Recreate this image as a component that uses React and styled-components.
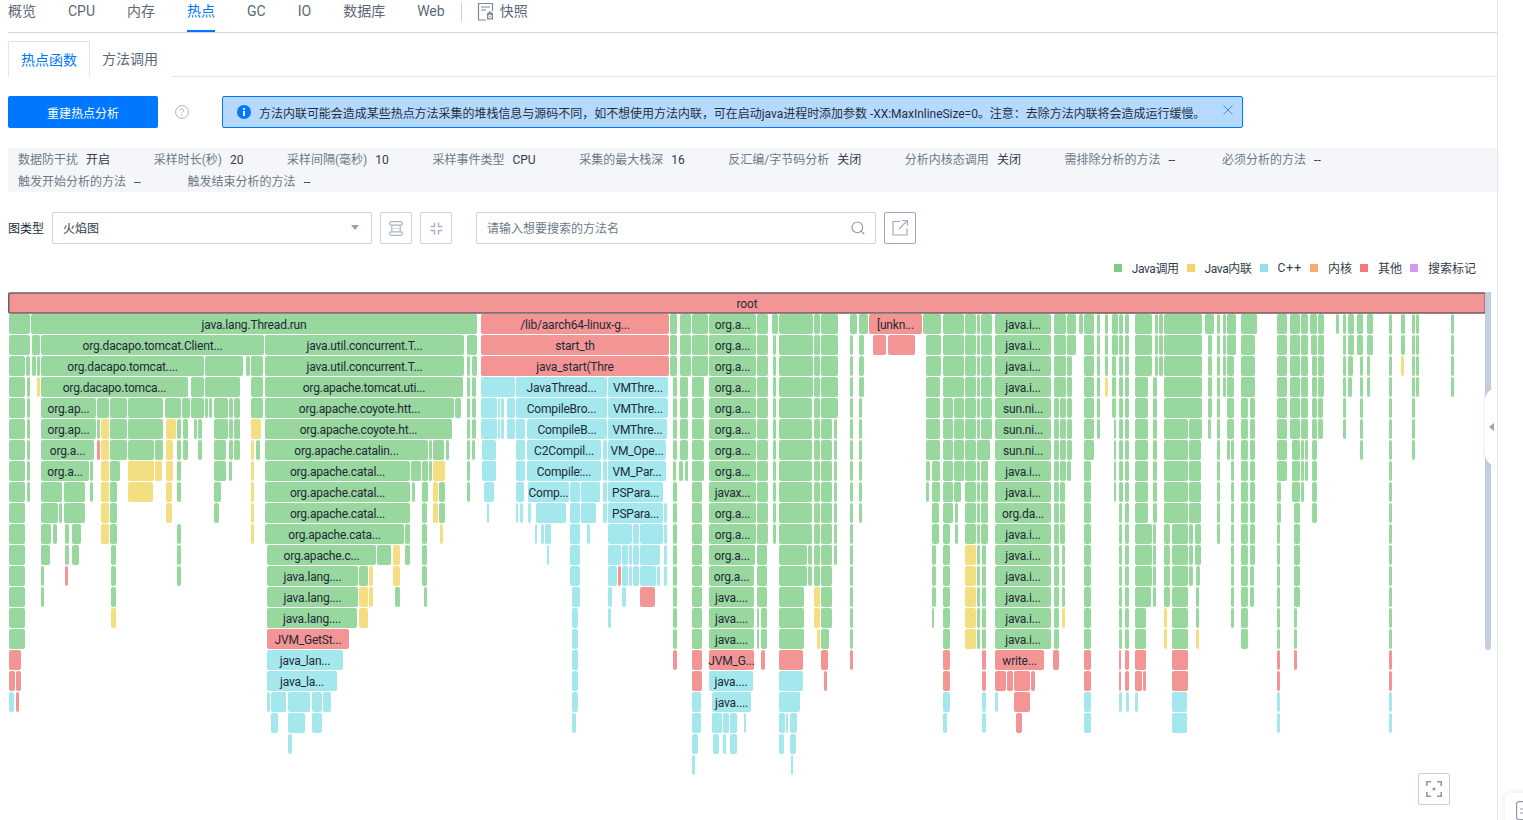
import React from 'react';
import styled, { createGlobalStyle } from 'styled-components';
import { Search } from 'lucide-react';

const GlobalStyle = createGlobalStyle`
  html, body {
    margin: 0;
    padding: 0;
    background: #fff;
    overflow: hidden;
  }
  body {
    font-family: Roboto, "Noto Sans CJK SC", sans-serif;
    font-size: 12px;
    color: #333c4b;
  }
  * { box-sizing: border-box; }
`;

const Page = styled.div`
  position: relative;
  width: 1523px;
  height: 820px;
  padding-left: 8px;
  overflow: hidden;
`;

const Content = styled.div`
  width: 1490px;
  height: 820px;
`;

const Rule = styled.div`
  position: absolute;
  top: 0;
  left: 1497px;
  width: 1px;
  height: 820px;
  background: #e2e7f0;
`;

const NavBar = styled.nav`
  display: flex;
  align-items: flex-start;
  gap: 32px;
  height: 33px;
  border-bottom: 1px solid #d3dae6;
`;

const NavItem = styled.a`
  height: 32px;
  font-size: 14px;
  line-height: 22px;
  color: ${(p) => (p.$active ? '#0077ff' : '#5c6878')};
  border-bottom: 2px solid ${(p) => (p.$active ? '#0077ff' : 'transparent')};
`;

const NavDivider = styled.span`
  width: 1px;
  height: 18px;
  margin: 3px -16px 0 -16px;
  background: #c9d0dc;
`;

const SnapshotLink = styled.a`
  display: flex;
  align-items: flex-start;
  gap: 6px;
  margin-left: -1px;
  font-size: 14px;
  line-height: 22px;
  color: #5c6878;
`;

const SubTabs = styled.div`
  display: flex;
  margin-top: 8px;
  height: 36px;
  border-bottom: 1px solid #dfe4ee;
`;

const SubTab = styled.a`
  width: 82px;
  height: 36px;
  padding-right: ${(p) => (p.$active ? '0' : '2px')};
  font-size: 14px;
  line-height: 37px;
  text-align: center;
  color: ${(p) => (p.$active ? '#0077ff' : '#5c6878')};
  background: #fff;
  border: ${(p) => (p.$active ? '1px solid #dfe4ee' : 'none')};
  border-bottom: ${(p) => (p.$active ? '1px solid #fff' : 'none')};
`;

const ActionRow = styled.div`
  display: flex;
  align-items: center;
  margin-top: 19px;
  height: 32px;
`;

const RebuildButton = styled.button`
  width: 150px;
  height: 32px;
  border: none;
  border-radius: 2px;
  background: #0077ff;
  color: #fff;
  font: inherit;
  font-size: 12px;
`;

const HelpMark = styled.span`
  display: flex;
  margin: 0 33px 0 17px;
`;

const AlertBox = styled.div`
  display: flex;
  align-items: center;
  width: 1021px;
  height: 32px;
  padding: 0 9px 0 14px;
  background: #b6d9ff;
  border: 1px solid #0077ff;
  border-radius: 2px;
`;

const AlertText = styled.span`
  flex: 1;
  margin-left: 8px;
  padding-top: 1px;
  font-size: 12px;
  letter-spacing: -0.03px;
  color: #25303f;
  white-space: nowrap;
`;

const InfoBar = styled.div`
  display: flex;
  flex-wrap: wrap;
  align-content: flex-start;
  margin-top: 20px;
  height: 44px;
  padding: 1px 0 0 10px;
  background: #f4f6fa;
`;

const InfoItem = styled.div`
  display: flex;
  gap: 8px;
  height: 22px;
  margin-right: 43.6px;
  line-height: 22px;
  white-space: nowrap;
`;

const InfoLabel = styled.span`
  color: #6e7987;
`;

const InfoValue = styled.span`
  min-width: 10px;
  color: #333c4b;
`;

const Toolbar = styled.div`
  display: flex;
  align-items: center;
  margin-top: 20px;
  height: 32px;
`;

const FieldLabel = styled.label`
  width: 44px;
  padding-bottom: 1px;
  color: #252c38;
`;

const SelectBox = styled.div`
  display: flex;
  align-items: center;
  justify-content: space-between;
  width: 320px;
  height: 32px;
  padding: 0 10px 1px;
  border: 1px solid #ccd3df;
  border-radius: 2px;
  color: #333c4b;
`;

const CaretMark = styled.span`
  width: 0;
  height: 0;
  margin-right: 2px;
  border-left: 4px solid transparent;
  border-right: 4px solid transparent;
  border-top: 5px solid #97a1b1;
`;

const IconButton = styled.button`
  display: flex;
  align-items: center;
  justify-content: center;
  width: 32px;
  height: 32px;
  margin-left: 8px;
  padding: 0;
  background: #fff;
  border: 1px solid ${(p) => (p.$dark ? '#9ea8b8' : '#ccd3df')};
  border-radius: 2px;
`;

const SearchBox = styled.div`
  display: flex;
  align-items: center;
  justify-content: space-between;
  width: 400px;
  height: 32px;
  margin-left: 24px;
  padding: 0 9px 1px 10px;
  border: 1px solid #ccd3df;
  border-radius: 2px;
  color: #6e7987;
`;

const Legend = styled.div`
  display: flex;
  justify-content: flex-end;
  align-items: center;
  gap: 8px;
  height: 16px;
  margin-top: 16px;
  margin-bottom: 16px;
  padding: 0 22px 1px 0;
`;

const LegendItem = styled.div`
  display: flex;
  align-items: center;
  gap: 10px;
  letter-spacing: ${(p) => p.$tracking}px;
  color: #333c4b;
`;

const LegendSwatch = styled.i`
  width: 8px;
  height: 8px;
  background: ${(p) => p.$color};
`;

const ChartWrap = styled.div`
  position: relative;
  width: 1489px;
  height: 528px;
`;

const FlameSvg = styled.svg`
  display: block;
  font-size: 12px;
  letter-spacing: -0.18px;
`;

const ScrollThumb = styled.div`
  position: absolute;
  left: 1477px;
  top: 0;
  width: 6px;
  height: 358px;
  border-radius: 0 0 3px 3px;
  background: #c3cde0;
`;

const SideHandle = styled.div`
  position: absolute;
  left: 1477px;
  top: 96px;
  width: 12px;
  height: 78px;
  background: #fff;
  border-radius: 12px 0 0 12px;
  box-shadow: -1px 0 3px rgba(90, 105, 130, 0.12);

  &::after {
    content: '';
    position: absolute;
    left: 4px;
    top: 35px;
    border-top: 4px solid transparent;
    border-bottom: 4px solid transparent;
    border-right: 5px solid #98a3b6;
  }
`;

const FocusButton = styled.button`
  position: absolute;
  left: 1410px;
  top: 481px;
  display: flex;
  align-items: center;
  justify-content: center;
  width: 32px;
  height: 32px;
  padding: 0;
  background: #fff;
  border: 1px solid #c6d0de;
  border-radius: 2px;
`;

const CornerWidget = styled.div`
  position: absolute;
  left: 1505px;
  top: 793px;
  width: 40px;
  height: 40px;
  padding: 8px 0 0 11px;
  background: #fff;
  border-radius: 6px 0 0 0;
  box-shadow: 0 0 6px rgba(90, 105, 130, 0.16);
`;

// flame graph frames per depth: [x0, x1, colour, label]
const COLORS = { g: '#98d79e', y: '#f4de82', c: '#a4e8ed', r: '#f39595' };

const ORG = 'org.a...';
const JI = 'java.i...';
const SN = 'sun.ni...';
const JV = 'java....';
const CAT = 'org.apache.catal...';
const LANG = 'java.lang....';
const CONC = 'java.util.concurrent.T...';

const FRAMES = [
  [[9,30],[31,477,'g','java.lang.Thread.run'],[481,669,'r','/lib/aarch64-linux-g...'],[670,677],[680,691],[692,708],[709,756,'g',ORG],[757,768],[772,778],[779,813],[814,820],[821,838],[850,857],[859,868],[869,922,'r','[unkn...'],[923,941],[943,964],[965,976],[977,980],[981,992],[995,1051,'g',JI],[1054,1066],[1067,1076],[1079,1083],[1084,1094],[1097,1100],[1105,1108],[1112,1118],[1119,1123],[1125,1129],[1135,1152],[1155,1158],[1159,1163],[1164,1202],[1205,1214],[1217,1220],[1223,1226],[1227,1236],[1241,1257],[1277,1287],[1290,1300],[1301,1308],[1310,1317],[1318,1324],[1336,1339],[1343,1346],[1348,1354],[1357,1363],[1367,1373],[1389,1392],[1401,1405],[1412,1415],[1416,1419],[1451,1454]],
  [[9,30],[32,40],[41,264,'g','org.dacapo.tomcat.Client...'],[265,464,'g',CONC],[467,477],[481,669,'r','start_th'],[670,677],[680,691],[692,708],[709,756,'g',ORG],[757,768],[773,776],[779,813],[814,820],[821,838],[850,853],[859,864],[873,886,'r'],[888,915,'r'],[926,941],[943,964],[965,976],[977,980],[981,992],[995,1051,'g',JI],[1054,1066],[1067,1076],[1084,1094],[1097,1100],[1105,1108],[1112,1118],[1119,1123],[1125,1129],[1135,1152],[1155,1158],[1159,1163],[1164,1202],[1208,1212],[1217,1220],[1223,1226],[1227,1236],[1241,1255],[1277,1287],[1290,1300],[1301,1308],[1311,1317],[1318,1324],[1343,1346],[1348,1354],[1357,1363],[1367,1373],[1389,1392],[1401,1405],[1412,1415],[1416,1419],[1451,1454]],
  [[9,25],[26,30],[32,36],[37,40],[41,204,'g','org.dacapo.tomcat....'],[205,243],[246,250],[251,263],[265,464,'g',CONC],[467,470],[472,477],[481,669,'r','java_start(Thre'],[670,677],[680,691],[692,708],[709,756,'g',ORG],[757,768],[773,776],[779,813],[814,820],[821,838],[850,853],[859,864],[926,941],[943,964],[965,976],[977,980],[981,992],[995,1051,'g',JI],[1054,1066],[1067,1072],[1084,1094],[1097,1100],[1105,1108],[1112,1116],[1119,1123],[1125,1129],[1135,1152],[1155,1158],[1159,1163],[1164,1202],[1208,1212],[1217,1220],[1223,1226],[1227,1234],[1241,1255],[1277,1287],[1290,1300],[1301,1308],[1312,1317],[1318,1324],[1343,1346],[1348,1353],[1360,1363],[1367,1370],[1389,1392],[1401,1404,'y'],[1412,1415],[1416,1419],[1451,1454]],
  [[9,25],[27,30],[37,40,'y'],[41,188,'g','org.dacapo.tomca...'],[191,204],[205,240],[251,263],[265,463,'g','org.apache.tomcat.uti...'],[467,470],[472,476],[481,515,'c'],[516,607,'c','JavaThread...'],[608,668,'c','VMThre...'],[673,677],[680,688],[692,704],[709,756,'g',ORG],[757,768],[773,776],[779,813],[814,820],[821,838],[850,853],[859,864],[926,940],[943,964],[965,976],[977,980],[981,992],[995,1051,'g',JI],[1054,1066],[1067,1072],[1084,1094],[1097,1100],[1105,1108,'y'],[1112,1116],[1119,1123],[1125,1129],[1135,1148],[1153,1157],[1164,1202],[1208,1212],[1217,1220],[1223,1226],[1227,1234],[1241,1255],[1277,1287],[1290,1300],[1301,1308],[1312,1317],[1318,1324],[1343,1346],[1348,1352],[1360,1363],[1367,1370],[1389,1392],[1412,1415],[1416,1419],[1451,1454]],
  [[9,25],[27,30],[41,96,'g','org.ap...'],[97,109],[110,127],[128,163],[165,181],[182,190],[191,204],[205,208],[209,212],[214,228],[229,233],[234,240],[251,263],[265,454,'g','org.apache.coyote.htt...'],[455,461],[467,470],[472,476],[481,497,'c'],[498,500,'c'],[501,504,'c'],[507,515,'c'],[516,607,'c','CompileBro...'],[608,668,'c','VMThre...'],[673,677],[680,688],[692,704],[709,756,'g',ORG],[757,768],[773,776],[779,812],[814,820],[821,838],[850,853],[859,862],[926,940],[943,953],[954,964],[965,976],[977,980],[981,992],[995,1051,'g',SN],[1054,1059],[1060,1066],[1067,1072],[1084,1094],[1097,1100],[1112,1116],[1119,1123],[1125,1129],[1135,1148],[1153,1157],[1164,1202],[1208,1212],[1217,1220],[1227,1234],[1241,1248],[1250,1255],[1277,1287],[1290,1300],[1301,1308],[1312,1317],[1318,1323],[1343,1346],[1360,1363],[1389,1392],[1412,1415]],
  [[9,25],[27,30],[41,96,'g','org.ap...'],[97,100],[101,109,'y'],[110,127],[128,163],[166,176,'y'],[177,181],[183,188],[194,197],[198,202],[214,228],[229,233],[234,240],[251,261,'y'],[265,452,'g','org.apache.coyote.ht...'],[467,470],[472,476],[481,497,'c'],[498,500,'c'],[501,504,'c'],[507,515,'c'],[516,525,'c'],[527,607,'c','CompileB...'],[608,667,'c','VMThre...'],[673,677],[680,688],[692,704],[709,756,'g',ORG],[757,768],[773,776],[779,812],[814,820],[821,832],[834,837],[850,853],[859,862],[926,940],[943,953],[954,964],[965,976],[977,980],[981,992],[995,1051,'g',SN],[1054,1059],[1060,1066],[1067,1072],[1084,1094],[1097,1100],[1114,1116],[1119,1123],[1125,1129],[1135,1148],[1153,1157],[1164,1188],[1189,1202],[1208,1211],[1217,1220],[1227,1234],[1241,1248],[1250,1255],[1277,1287],[1290,1300],[1301,1308],[1312,1317],[1318,1323],[1343,1346],[1360,1363],[1389,1392],[1412,1415]],
  [[9,25],[27,30],[41,94,'g','org.a...'],[97,100,'r'],[101,109,'y'],[110,127],[128,154],[155,163],[166,173,'y'],[177,181],[183,188],[198,202],[214,226],[229,233],[234,240],[251,254,'y'],[256,260],[265,428,'g','org.apache.catalin...'],[429,432],[433,444],[446,449],[467,470],[472,475],[482,496,'c'],[516,525,'c'],[527,601,'c','C2Compil...'],[603,607,'c'],[608,666,'c','VM_Ope...'],[673,677],[680,688],[692,704],[709,756,'g',ORG],[757,768],[773,776],[779,812],[814,820],[821,832],[834,837],[850,853],[859,862],[926,940],[943,953],[954,964],[965,976],[977,990],[995,1051,'g',SN],[1054,1059],[1060,1066],[1067,1072],[1084,1094],[1114,1116],[1119,1123],[1125,1129],[1135,1148],[1153,1157],[1164,1188],[1189,1201],[1217,1220],[1227,1230],[1231,1234],[1241,1248],[1250,1255],[1277,1287],[1292,1300],[1301,1304],[1305,1308],[1312,1317],[1360,1363],[1389,1392],[1412,1415]],
  [[9,25],[27,30],[41,89,'g','org.a...'],[90,93],[101,109,'y'],[110,120],[128,154,'y'],[155,162,'y'],[166,173,'y'],[177,181],[214,226],[229,232],[251,254,'y'],[265,410,'g',CAT],[411,421],[422,428],[429,432],[433,445,'y'],[467,470],[482,496,'c'],[516,525,'c'],[527,601,'c','Compile:...'],[603,607,'c'],[608,666,'c','VM_Par...'],[673,676],[679,683],[685,688],[692,704],[709,756,'g',ORG],[757,768],[773,776],[779,812],[814,820],[821,832],[834,837],[850,853],[859,862],[926,930],[932,940],[943,953],[954,964],[965,976],[977,980],[981,988],[995,1051,'g',JI],[1054,1059],[1060,1066],[1067,1071],[1084,1091],[1114,1116],[1119,1123],[1125,1129],[1135,1148],[1153,1157],[1164,1188],[1189,1201],[1217,1220],[1231,1234],[1241,1248],[1250,1255],[1277,1287],[1292,1300],[1301,1304],[1305,1308],[1312,1317],[1389,1392]],
  [[9,25],[27,30],[41,62],[64,85],[90,93],[101,109,'y'],[110,117],[128,153,'y'],[166,172,'y'],[177,181],[214,221],[251,254,'y'],[265,410,'g',CAT],[412,415],[422,428],[433,438,'y'],[439,445],[467,470],[484,494,'c'],[516,524,'c'],[528,569,'c','Comp...'],[570,580,'c'],[581,600,'c'],[603,607,'c'],[608,663,'c','PSPara...'],[673,677],[692,702],[709,756,'g','javax...'],[757,768],[773,776],[779,812],[814,820],[821,832],[834,837],[850,853],[859,862],[926,929],[932,940],[943,953],[954,961],[965,976],[977,980],[981,988],[995,1051,'g',JI],[1054,1059],[1060,1065],[1084,1091],[1114,1116],[1119,1123],[1125,1129],[1135,1148],[1153,1157],[1164,1188],[1189,1201],[1217,1220],[1231,1234],[1241,1248],[1250,1255],[1277,1281],[1292,1300],[1301,1304],[1312,1317],[1389,1392]],
  [[9,25],[41,58],[59,62],[64,85],[101,109,'y'],[110,117],[166,172,'y'],[214,219],[251,254,'y'],[265,410,'g',CAT],[422,427],[433,438,'y'],[439,445],[487,489,'c'],[516,518,'c'],[520,523,'c'],[528,531,'c'],[536,566,'c'],[570,580,'c'],[581,596,'c'],[603,607,'c'],[608,663,'c','PSPara...'],[664,667,'c'],[673,677],[692,702],[709,756,'g',ORG],[757,768],[773,776],[779,812],[814,820],[821,832],[834,837],[850,853],[859,862],[932,939],[943,953],[955,958],[965,976],[977,980],[981,988],[995,1051,'g','org.da...'],[1054,1059],[1060,1065],[1084,1091],[1119,1122],[1125,1129],[1135,1148],[1153,1157],[1164,1188],[1189,1201],[1217,1220],[1231,1234],[1241,1248],[1250,1255],[1277,1281],[1294,1300],[1312,1317],[1389,1392]],
  [[9,25],[41,51],[53,57],[65,69],[72,81],[101,109,'y'],[110,117],[177,181],[251,254,'y'],[265,404,'g','org.apache.cata...'],[405,410],[422,427],[440,443,'y'],[535,537,'c'],[541,544,'c'],[545,551,'c'],[570,580,'c'],[587,590,'c'],[608,632,'c'],[633,639,'c'],[640,663,'c'],[664,667,'c'],[673,677],[692,702],[709,756,'g',ORG],[757,768],[773,776],[779,812],[814,820],[821,832],[834,837],[850,853],[932,939],[943,950],[955,958],[965,976],[977,980],[981,988],[995,1051,'g',JI],[1054,1059],[1060,1065],[1084,1091],[1119,1122],[1125,1129],[1135,1152],[1153,1156],[1164,1170],[1172,1188],[1189,1193],[1195,1201],[1217,1220],[1231,1234],[1241,1248],[1250,1255],[1277,1280],[1294,1300],[1389,1392]],
  [[9,25],[41,50],[65,69],[72,79],[111,116],[177,181],[267,376,'g','org.apache.c...'],[377,391],[393,400,'y'],[405,410],[422,427],[547,549,'c'],[570,580,'c'],[608,621,'c'],[622,628,'c'],[629,632,'c'],[633,639,'c'],[640,660,'c'],[664,667,'c'],[673,677],[692,702],[709,755,'g',ORG],[757,767],[779,807],[808,812],[814,820],[821,832],[834,837],[850,853],[932,936],[943,950],[965,976,'y'],[977,980],[982,986],[995,1051,'g',JI],[1054,1059],[1062,1065],[1084,1091],[1119,1122],[1125,1129],[1135,1152],[1153,1156],[1164,1170],[1172,1188],[1189,1193],[1195,1201],[1231,1234],[1241,1248],[1250,1255],[1277,1280],[1294,1300],[1389,1392]],
  [[9,25],[41,44],[65,68,'r'],[111,116],[177,181],[267,358,'g',LANG],[359,368],[369,373,'y'],[393,400,'y'],[422,427],[570,580,'c'],[608,617,'c'],[618,621,'r'],[622,628,'c'],[629,632,'c'],[633,639,'c'],[640,656,'c'],[657,660,'c'],[664,667,'c'],[673,677],[692,702],[709,754,'g',ORG],[757,767],[779,807],[808,812],[814,820],[821,832],[850,853],[932,936],[943,950],[965,976,'y'],[977,980],[982,986],[995,1051,'g',JI],[1054,1059],[1062,1065],[1084,1091],[1119,1122],[1125,1129],[1135,1152],[1153,1156],[1164,1170],[1172,1188],[1189,1193],[1196,1200],[1231,1234],[1241,1248],[1250,1254],[1277,1280],[1294,1300],[1389,1392]],
  [[9,25],[41,44],[111,116],[267,358,'g',LANG],[359,368,'y'],[369,373,'y'],[395,400],[424,427],[572,580,'c'],[608,612,'c'],[622,626,'c'],[640,655,'r'],[673,677],[692,702],[709,754,'g',JV],[757,767],[779,804],[814,820,'y'],[821,832],[850,853],[932,936],[943,950],[965,976,'y'],[977,980],[982,986],[995,1051,'g',JI],[1054,1059],[1062,1065],[1084,1091],[1119,1122],[1125,1129],[1135,1151],[1153,1156],[1164,1170],[1172,1188],[1196,1199],[1231,1234],[1241,1248],[1250,1254],[1277,1280],[1294,1300],[1389,1392]],
  [[9,25],[111,116,'y'],[267,357,'g',LANG],[359,368,'y'],[572,578,'c'],[608,611,'c'],[673,677],[692,702],[709,754,'g',JV],[757,759],[761,767],[779,804],[814,820,'y'],[821,832],[850,853],[932,934],[943,950],[965,976,'y'],[977,980],[982,986],[995,1051,'g',JI],[1054,1059],[1062,1065,'y'],[1084,1091],[1119,1122],[1125,1129],[1135,1146],[1164,1167,'y'],[1172,1188],[1196,1199],[1231,1234],[1241,1248],[1277,1280],[1294,1297],[1389,1392]],
  [[9,25],[267,349,'r','JVM_GetSt...'],[572,578,'c'],[673,677],[692,702],[709,754,'g',JV],[757,759],[761,767],[779,804],[817,820,'y'],[821,829],[850,853],[943,950],[965,976,'y'],[977,980],[982,986],[995,1051,'g',JI],[1054,1059],[1084,1091],[1119,1122],[1125,1129],[1135,1146],[1164,1167,'y'],[1172,1188],[1196,1199,'y'],[1241,1248],[1277,1280],[1294,1297],[1389,1392]],
  [[9,21,'r'],[267,343,'c','java_lan...'],[572,578,'c'],[673,677,'r'],[692,702,'r'],[709,754,'r','JVM_G...'],[761,765,'r'],[779,803,'r'],[821,828,'r'],[850,853,'r'],[943,950,'r'],[982,986,'r'],[995,1044,'r','write...'],[1053,1059,'r'],[1084,1091,'r'],[1119,1121,'r'],[1125,1129,'r'],[1135,1146,'r'],[1172,1188,'r'],[1277,1280,'r'],[1294,1297,'r'],[1389,1392,'r']],
  [[9,15,'r'],[16,21,'r'],[267,337,'c','java_la...'],[572,578,'c'],[692,702,'r'],[709,753,'c',JV],[779,803,'c'],[824,827,'r'],[943,950,'r'],[982,986,'r'],[995,1006,'r'],[1007,1013,'r'],[1014,1030,'r'],[1031,1035,'r'],[1084,1091,'r'],[1119,1121,'r'],[1125,1129,'r'],[1135,1142,'r'],[1143,1146,'r'],[1172,1188,'r'],[1277,1280,'r'],[1389,1392,'r']],
  [[9,14,'c'],[16,19,'r'],[267,270,'c'],[271,286,'c'],[288,310,'c'],[312,322,'c'],[323,331,'c'],[572,578,'c'],[692,701,'c'],[712,751,'c',JV],[779,800,'c'],[943,950,'c'],[982,986,'c'],[995,998,'c'],[1014,1030,'r'],[1084,1091,'c'],[1119,1122,'c'],[1126,1129,'c'],[1135,1138,'c'],[1172,1187,'c'],[1277,1280,'c'],[1389,1392,'c']],
  [[271,278,'c'],[288,305,'c'],[312,322,'c'],[572,576,'c'],[692,701,'c'],[712,722,'c'],[723,729,'c'],[730,737,'c'],[744,746,'c'],[779,785,'c'],[786,788,'c'],[790,797,'c'],[943,947,'c'],[982,986,'c'],[1016,1022,'r'],[1084,1091,'c'],[1172,1187,'c'],[1277,1280,'c'],[1389,1392,'c']],
  [[288,292,'c'],[692,698,'c'],[713,719,'c'],[723,726,'c'],[730,737,'c'],[779,784,'c'],[790,796,'c']],
  [[692,695,'c'],[791,793,'c']],
];

const INFO = [
  ['数据防干扰', '开启'],
  ['采样时长(秒)', '20'],
  ['采样间隔(毫秒)', '10'],
  ['采样事件类型', 'CPU'],
  ['采集的最大栈深', '16'],
  ['反汇编/字节码分析', '关闭'],
  ['分析内核态调用', '关闭'],
  ['需排除分析的方法', '--'],
  ['必须分析的方法', '--'],
  ['触发开始分析的方法', '--'],
  ['触发结束分析的方法', '--'],
];

const LEGEND = [
  ['Java调用', '#7fcb88', -0.4],
  ['Java内联', '#f2d36e', -0.4],
  ['C++', '#92e3e8', 1],
  ['内核', '#f9a972', 0],
  ['其他', '#f07a7a', 0],
  ['搜索标记', '#d698ec', 0],
];

const NAV = ['概览', 'CPU', '内存', '热点', 'GC', 'IO', '数据库', 'Web'];

const SnapshotIcon = () => (
  <svg width="17" height="19" viewBox="0 0 17 19" fill="none" stroke="#7d8799" strokeWidth="1.2" style={{ marginTop: 2 }}>
    <path d="M9 18H1.5V1.5h14V9" />
    <path d="M4 5h9M4 8h5" />
    <path d="M10 11h6v6.5h-6zM11.5 11V9.5h3V11" fill="#7d8799" stroke="none" />
    <circle cx="13" cy="14.5" r="1.3" stroke="#fff" />
  </svg>
);

const HelpIcon = () => (
  <svg width="14" height="14" viewBox="0 0 14 14" fill="none">
    <circle cx="7" cy="7" r="6.4" stroke="#a7b0be" />
    <path d="M5.2 5.4C5.2 4.3 6 3.7 7 3.7s1.8.7 1.8 1.6c0 1.3-1.8 1.3-1.8 2.9" stroke="#a7b0be" />
    <circle cx="7" cy="10" r=".7" fill="#a7b0be" />
  </svg>
);

const InfoIcon = () => (
  <svg width="14" height="14" viewBox="0 0 14 14">
    <circle cx="7" cy="7" r="7" fill="#0077ff" />
    <rect x="6.1" y="3" width="1.8" height="1.8" fill="#fff" />
    <rect x="6.1" y="6" width="1.8" height="5" fill="#fff" />
  </svg>
);

const CloseIcon = () => (
  <svg width="10" height="10" viewBox="0 0 10 10" stroke="#3d8fff" strokeWidth="1" style={{ marginTop: -4 }}>
    <path d="M.5.5l9 9M9.5.5l-9 9" />
  </svg>
);

const StackIcon = () => (
  <svg width="14" height="15" viewBox="0 0 14 15" fill="none" stroke="#aab3c1" strokeWidth="1.2">
    <rect x=".7" y=".7" width="12.6" height="3.4" rx="1.7" />
    <rect x=".7" y="10.9" width="12.6" height="3.4" rx="1.7" />
    <path d="M2.8 4.2v6.6M11.2 4.2v6.6" />
    <path d="M4.5 7.5h5" strokeDasharray="1 1" />
  </svg>
);

const CompressIcon = () => (
  <svg width="13" height="13" viewBox="0 0 13 13" fill="none" stroke="#aab3c1" strokeWidth="1.5">
    <path d="M4.5 .5v4H.5M8.5 .5v4h4M4.5 12.5v-4H.5M8.5 12.5v-4h4" />
  </svg>
);

const ExportIcon = () => (
  <svg width="18" height="18" viewBox="0 0 18 18" fill="none" stroke="#a2acbc" strokeWidth="1.2">
    <path d="M9 2.5H2v13.5h14V9.5" />
    <path d="M11 1.5h5.5V7M16.5 1.5L8 10" />
  </svg>
);

const FocusIcon = () => (
  <svg width="16" height="16" viewBox="0 0 16 16" fill="none" stroke="#8f9ab0" strokeWidth="1.6">
    <path d="M.8 5V.8H5M11 .8h4.2V5M.8 11v4.2H5M15.2 11v4.2H11" />
    <circle cx="8" cy="8" r="1.6" fill="#8f9ab0" stroke="none" />
  </svg>
);

const CornerIcon = () => (
  <svg width="18" height="20" viewBox="0 0 18 20" fill="none" stroke="#8f9ab0" strokeWidth="1.2">
    <rect x=".6" y=".6" width="16" height="18" rx="2" />
    <path d="M4 8h9M4 12h9" />
  </svg>
);

const FlameGraph = () => (
  <FlameSvg width="1478" height="484" viewBox="8 292 1478 484">
    <rect x="8.75" y="293" width="1476.5" height="20" rx="1" fill={COLORS.r} stroke="#6e5f60" strokeWidth="1.5" />
    <text x="747" y="303.5" textAnchor="middle" dominantBaseline="central" fill="#2a2f38">root</text>
    {FRAMES.map((row, depth) =>
      row.map(([x0, x1, tone = 'g', label]) => {
        const y = 314 + depth * 21;
        return (
          <g key={`${depth}-${x0}`}>
            <rect x={x0} y={y} width={x1 - x0} height={20} rx={2} fill={COLORS[tone]} />
            {label && (
              <text x={(x0 + x1) / 2} y={y + 11} textAnchor="middle" dominantBaseline="central" fill="#1f2937">
                {label}
              </text>
            )}
          </g>
        );
      })
    )}
  </FlameSvg>
);

const App = () => {
  return (
    <Page>
      <GlobalStyle />
      <Content>
        <NavBar>
          {NAV.map((name) => (
            <NavItem key={name} $active={name === '热点'}>
              {name}
            </NavItem>
          ))}
          <NavDivider />
          <SnapshotLink>
            <SnapshotIcon />
            快照
          </SnapshotLink>
        </NavBar>

        <SubTabs>
          <SubTab $active>热点函数</SubTab>
          <SubTab>方法调用</SubTab>
        </SubTabs>

        <ActionRow>
          <RebuildButton>重建热点分析</RebuildButton>
          <HelpMark>
            <HelpIcon />
          </HelpMark>
          <AlertBox>
            <InfoIcon />
            <AlertText>
              方法内联可能会造成某些热点方法采集的堆栈信息与源码不同，如不想使用方法内联，可在启动java进程时添加参数 -XX:MaxInlineSize=0。注意：去除方法内联将会造成运行缓慢。
            </AlertText>
            <CloseIcon />
          </AlertBox>
        </ActionRow>

        <InfoBar>
          {INFO.map(([label, value]) => (
            <InfoItem key={label}>
              <InfoLabel>{label}</InfoLabel>
              <InfoValue>{value}</InfoValue>
            </InfoItem>
          ))}
        </InfoBar>

        <Toolbar>
          <FieldLabel>图类型</FieldLabel>
          <SelectBox>
            火焰图
            <CaretMark />
          </SelectBox>
          <IconButton>
            <StackIcon />
          </IconButton>
          <IconButton>
            <CompressIcon />
          </IconButton>
          <SearchBox>
            请输入想要搜索的方法名
            <Search size={16} color="#8b95a5" strokeWidth={1.6} />
          </SearchBox>
          <IconButton $dark>
            <ExportIcon />
          </IconButton>
        </Toolbar>

        <Legend>
          {LEGEND.map(([label, color, tracking]) => (
            <LegendItem key={label} $tracking={tracking}>
              <LegendSwatch $color={color} />
              {label}
            </LegendItem>
          ))}
        </Legend>

        <ChartWrap>
          <FlameGraph />
          <ScrollThumb />
          <SideHandle />
          <FocusButton>
            <FocusIcon />
          </FocusButton>
        </ChartWrap>
      </Content>
      <Rule />
      <CornerWidget>
        <CornerIcon />
      </CornerWidget>
    </Page>
  );
};

export default App;
